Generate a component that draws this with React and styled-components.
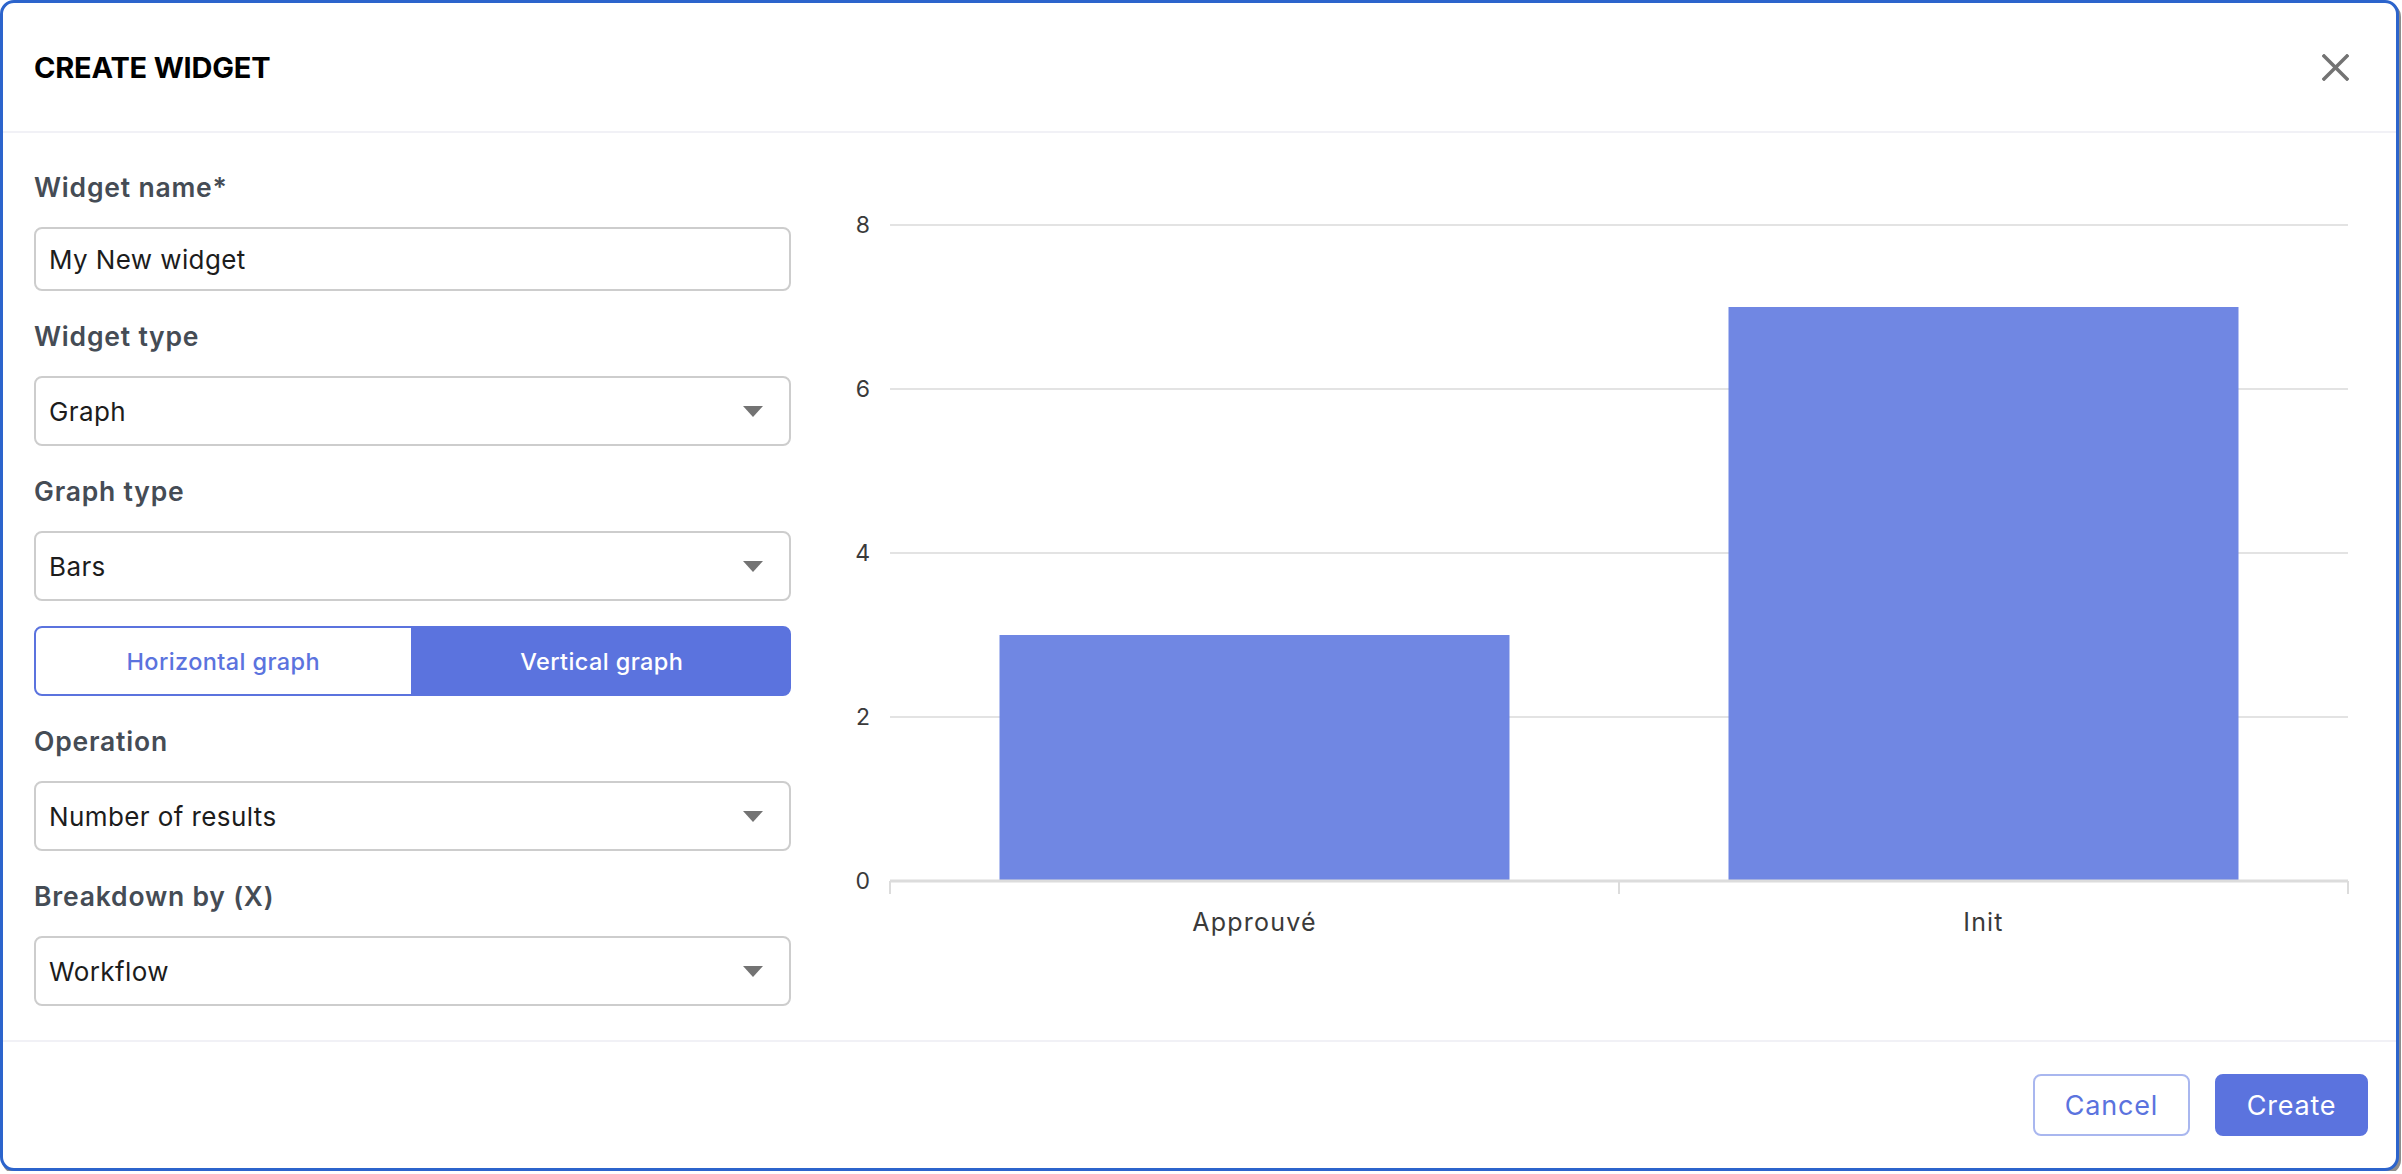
import React, { useState } from "react";
import styled, { createGlobalStyle } from "styled-components";

const GlobalStyle = createGlobalStyle`
  html, body {
    margin: 0;
    padding: 0;
    background: #ffffff;
  }
  * {
    box-sizing: border-box;
  }
`;

const FONT = `"Inter", "Open Sans", "Noto Sans", sans-serif`;
const BLUE = "#5b73de";

const Dialog = styled.div`
  width: 2399px;
  height: 1171px;
  border: 3px solid #2c64cc;
  border-radius: 14px;
  box-shadow: 2px 3px 0 #8d8d8d;
  background: white;
  display: flex;
  flex-direction: column;
  font-family: ${FONT};
  overflow: hidden;
`;

const Header = styled.div`
  height: 130px;
  flex-shrink: 0;
  display: flex;
  align-items: center;
  justify-content: space-between;
  padding: 0 47px 0 31px;
  border-bottom: 2px solid #f1f1f6;
`;

const Title = styled.h1`
  margin: 0;
  font-size: 29px;
  font-weight: 700;
  color: #000;
  letter-spacing: -0.2px;
`;

const CloseButton = styled.button`
  border: none;
  background: none;
  padding: 0;
  width: 27px;
  height: 27px;
  cursor: pointer;
  display: flex;
`;

const Body = styled.div`
  flex: 1;
  display: flex;
  min-height: 0;
`;

const FormColumn = styled.div`
  width: 788px;
  flex-shrink: 0;
  padding: 34px 0 0 31px;
  display: flex;
  flex-direction: column;
  gap: 25px;
`;

const Field = styled.div`
  display: flex;
  flex-direction: column;
`;

const Label = styled.label`
  font-size: 26.5px;
  font-weight: 600;
  color: #454c55;
  letter-spacing: 0.8px;
  line-height: 40px;
  margin-bottom: 20px;
`;

const TextInput = styled.input`
  height: 64px;
  width: 100%;
  border: 2px solid #cdcdcd;
  border-radius: 8px;
  padding: 0 13px;
  font-family: ${FONT};
  font-size: 26px;
  letter-spacing: 0.4px;
  color: #1c1c1c;
  outline: none;
`;

const SelectBox = styled.div`
  height: 70px;
  width: 100%;
  border: 2px solid #cdcdcd;
  border-radius: 8px;
  padding: 0 26px 0 13px;
  display: flex;
  align-items: center;
  justify-content: space-between;
  font-size: 26px;
  letter-spacing: 0.4px;
  color: #1c1c1c;
  cursor: pointer;
`;

const Caret = styled.span`
  width: 0;
  height: 0;
  border-left: 10px solid transparent;
  border-right: 10px solid transparent;
  border-top: 11px solid #737373;
`;

const Toggle = styled.div`
  display: flex;
  height: 70px;
`;

const ToggleButton = styled.button`
  flex: 1;
  font-family: ${FONT};
  font-size: 23.5px;
  font-weight: 500;
  letter-spacing: 0.4px;
  border: 2px solid ${BLUE};
  cursor: pointer;
  background: ${(p) => (p.active ? BLUE : "#fff")};
  color: ${(p) => (p.active ? "#fff" : BLUE)};
  border-radius: ${(p) => (p.side === "left" ? "8px 0 0 8px" : "0 8px 8px 0")};
`;

const ChartArea = styled.div`
  flex: 1;
  padding: 57px 0 0 49px;
`;

const Footer = styled.div`
  height: 128px;
  flex-shrink: 0;
  border-top: 2px solid #f1f1f6;
  display: flex;
  align-items: center;
  justify-content: flex-end;
  gap: 25px;
  padding-right: 28px;
`;

const Button = styled.button`
  height: 62px;
  border-radius: 8px;
  font-family: ${FONT};
  font-size: 27px;
  font-weight: 400;
  letter-spacing: 0.8px;
  cursor: pointer;
  padding: 0;
  width: ${(p) => p.width}px;
  border: 2px solid ${(p) => (p.primary ? BLUE : "#a9b7ef")};
  background: ${(p) => (p.primary ? BLUE : "#fff")};
  color: ${(p) => (p.primary ? "#fff" : BLUE)};
`;

const Select = ({ value }) => (
  <SelectBox>
    <span>{value}</span>
    <Caret />
  </SelectBox>
);

const data = [
  { label: "Approuvé", value: 3 },
  { label: "Init", value: 7 },
];

const CHART_FONT = "Inter, 'Open Sans', sans-serif";

const BarChart = () => {
  const left = 50;
  const right = 1508;
  const top = 35;
  const zero = 691;
  const step = (zero - top) / 8;
  const slot = (right - left) / data.length;
  const barW = 510;
  const ticks = [0, 2, 4, 6, 8];

  return (
    <svg width="1520" height="760" viewBox="0 0 1520 760">
      {ticks.map((t) => {
        const y = zero - t * step;
        return (
          <g key={t}>
            {t !== 0 && (
              <line x1={left} x2={right} y1={y} y2={y} stroke="#e3e3e3" strokeWidth="2" />
            )}
            <text
              x={30}
              y={y + 8}
              textAnchor="end"
              fontFamily={CHART_FONT}
              fontSize="23"
              fill="#3a3a3a"
            >
              {t}
            </text>
          </g>
        );
      })}
      {data.map((d, i) => {
        const cx = left + slot * i + slot / 2;
        const h = d.value * step;
        return (
          <g key={d.label}>
            <rect x={cx - barW / 2} y={zero - h} width={barW} height={h} fill="#7087e3" />
            <text
              x={cx}
              y={741}
              textAnchor="middle"
              fontFamily={CHART_FONT}
              fontSize="25"
              letterSpacing="1.2"
              fill="#3a3a3a"
            >
              {d.label}
            </text>
          </g>
        );
      })}
      <line x1={left} x2={right} y1={zero} y2={zero} stroke="#dcdcdc" strokeWidth="3" />
      {[0, 1, 2].map((i) => {
        const x = left + slot * i;
        return <line key={i} x1={x} x2={x} y1={zero} y2={zero + 13} stroke="#dcdcdc" strokeWidth="2" />;
      })}
    </svg>
  );
};

const App = () => {
  const [orientation, setOrientation] = useState("vertical");

  return (
    <>
      <GlobalStyle />
      <Dialog>
        <Header>
          <Title>CREATE WIDGET</Title>
          <CloseButton aria-label="close">
            <svg width="27" height="27" viewBox="0 0 27 27">
              <path d="M2 2 L25 25 M25 2 L2 25" stroke="#737373" strokeWidth="3.5" strokeLinecap="square" />
            </svg>
          </CloseButton>
        </Header>
        <Body>
          <FormColumn>
            <Field>
              <Label>Widget name*</Label>
              <TextInput defaultValue="My New widget" />
            </Field>
            <Field>
              <Label>Widget type</Label>
              <Select value="Graph" />
            </Field>
            <Field>
              <Label>Graph type</Label>
              <Select value="Bars" />
            </Field>
            <Toggle>
              <ToggleButton
                side="left"
                active={orientation === "horizontal"}
                onClick={() => setOrientation("horizontal")}
              >
                Horizontal graph
              </ToggleButton>
              <ToggleButton
                side="right"
                active={orientation === "vertical"}
                onClick={() => setOrientation("vertical")}
              >
                Vertical graph
              </ToggleButton>
            </Toggle>
            <Field>
              <Label>Operation</Label>
              <Select value="Number of results" />
            </Field>
            <Field>
              <Label>Breakdown by (X)</Label>
              <Select value="Workflow" />
            </Field>
          </FormColumn>
          <ChartArea>
            <BarChart />
          </ChartArea>
        </Body>
        <Footer>
          <Button width={157}>Cancel</Button>
          <Button width={153} primary>
            Create
          </Button>
        </Footer>
      </Dialog>
    </>
  );
};

export default App;
